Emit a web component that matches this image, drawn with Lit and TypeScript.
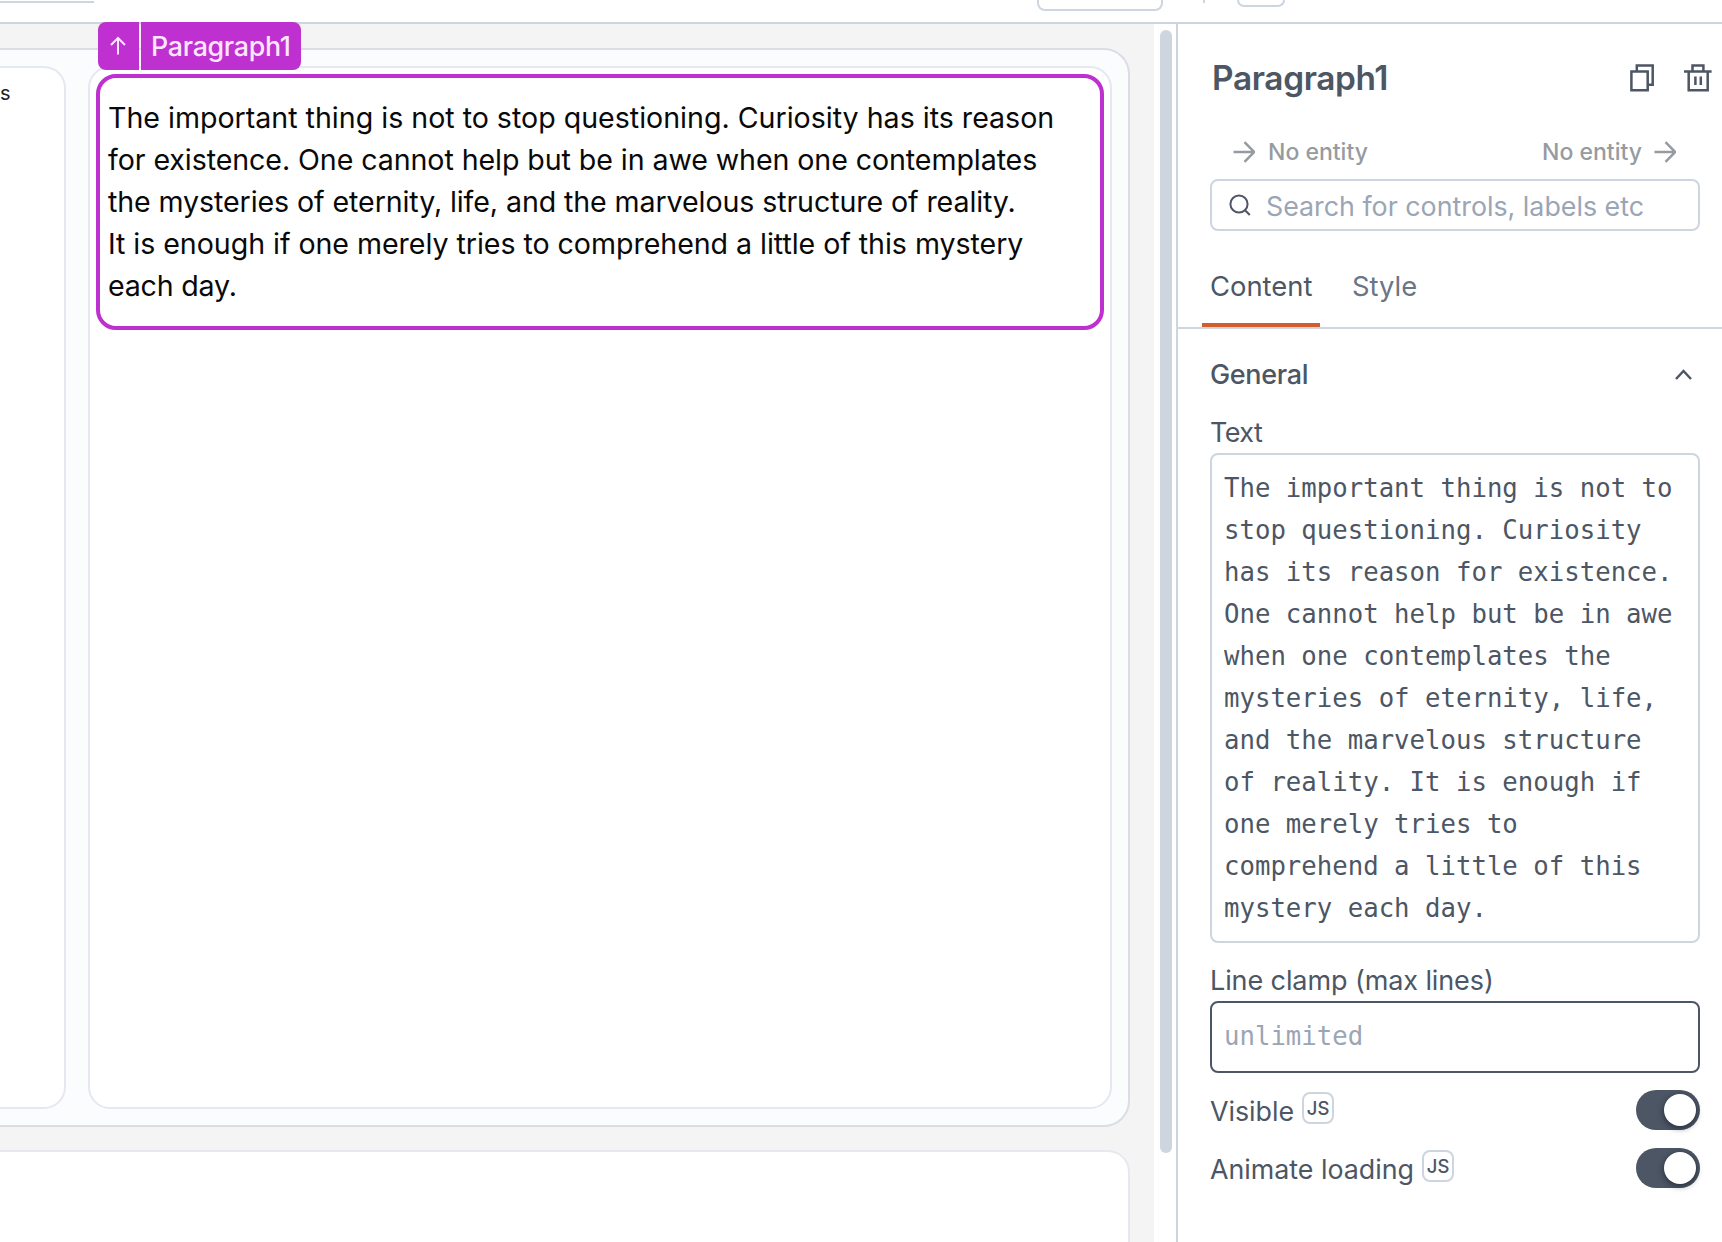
import { LitElement, html, css, svg } from "lit";
import { customElement, property } from "lit/decorators.js";

// Each line carries its own tracking, in pixels.
const QUOTE_LINES: [string, number][] = [
  ["The important thing is not to stop questioning. Curiosity has its reason", -0.01],
  ["for existence. One cannot help but be in awe when one contemplates", -0.08],
  ["the mysteries of eternity, life, and the marvelous structure of reality.", -0.1],
  ["It is enough if one merely tries to comprehend a little of this mystery", -0.05],
  ["each day.", -0.2],
];

const EDITOR_LINES = [
  "The important thing is not to",
  "stop questioning. Curiosity",
  "has its reason for existence.",
  "One cannot help but be in awe",
  "when one contemplates the",
  "mysteries of eternity, life,",
  "and the marvelous structure",
  "of reality. It is enough if",
  "one merely tries to",
  "comprehend a little of this",
  "mystery each day.",
];

const shared = css`
  * { box-sizing: border-box; }
  svg { display: block; flex: none; fill: none; stroke: currentColor; }
`;

@customElement("toggle-row")
class ToggleRow extends LitElement {
  @property() label = "";
  static styles = [shared, css`
    :host { display: flex; align-items: center; height: 40px; }
    .label { padding-top: 2px; font-size: 26.8px; line-height: 36px; white-space: nowrap; }
    .js {
      width: 32px; height: 32px; margin: 0 auto 4px 8px;
      border: 2px solid #cdd5df; border-radius: 8px;
      display: flex; align-items: center; justify-content: center;
      font-size: 18.5px; line-height: 24px; font-weight: 500;
    }
    .switch {
      width: 64px; height: 40px; border-radius: 20px; background: #4c5664;
      padding: 4px 4px; display: flex; justify-content: flex-end;
    }
    .knob { width: 32px; height: 32px; border-radius: 50%; background: #fff; box-shadow: 0 2px 6px rgba(10, 16, 30, 0.6); }
  `];
  render() {
    return html`<span class="label">${this.label}</span><span class="js">JS</span>
      <span class="switch"><span class="knob"></span></span>`;
  }
}

@customElement("canvas-area")
class CanvasArea extends LitElement {
  static styles = [shared, css`
    :host { display: flex; width: 1176px; }
    .page { width: 1154px; background: #f4f4f4; padding: 24px 24px 0 0; }
    .section {
      height: 1079px; display: flex; gap: 22px; padding: 16px 16px 16px 0;
      background: #fbfcfe; border: 2px solid #dadde3; border-left: 0; border-radius: 0 26px 26px 0;
    }
    .zone { background: #fff; border: 2px solid #e5e8ef; border-radius: 22px; }
    .left { width: 66px; border-left: 0; border-radius: 0 22px 22px 0; padding-top: 13px; font-size: 20px; line-height: 24px; color: #222; }
    .right { flex: 1; padding: 6px; }
    .widget { position: relative; height: 256px; border: 4px solid #be30cf; border-radius: 20px; padding: 19px 0 0 8px; }
    .widget p { margin: 0; font-size: 28.6px; line-height: 42.1px; color: #090909; white-space: nowrap; }
    .tag {
      position: absolute; left: -2px; top: -56px; width: 203px; height: 48px;
      display: flex; border-radius: 8px; overflow: hidden; color: #fbe6fd;
    }
    .up { width: 41px; background: #be30cf; display: flex; align-items: center; justify-content: center; padding-right: 2px; }
    .name {
      flex: 1; margin-left: 2px; background: #be30cf; padding: 3px 0 0 10px;
      font-size: 26.8px; line-height: 42px; font-weight: 500; letter-spacing: -0.3px;
    }
    .next { height: 120px; margin-top: 23px; background: #fff; border: 2px solid #e5e8ef; border-left: 0; border-radius: 0 22px 22px 0; }
    .gutter { width: 22px; background: #fff; padding: 6px 0 0 6px; }
    .thumb { width: 12px; height: 1123px; border-radius: 6px; background: #cdd5df; }
  `];
  render() {
    return html`
      <div class="page">
        <div class="section">
          <div class="zone left">s</div>
          <div class="zone right">
            <div class="widget">
              <p>${QUOTE_LINES.map(([l, t], i) => html`${i ? html`<br>` : ""}<span style="letter-spacing:${t}px">${l}</span>`)}</p>
              <div class="tag">
                <span class="up"><svg width="18" height="20" viewBox="0 0 18 20" stroke-width="2"><path d="M9 18.5V2.5M2 9l7-7 7 7"/></svg></span>
                <span class="name">Paragraph1</span>
              </div>
            </div>
          </div>
        </div>
        <div class="next"></div>
      </div>
      <div class="gutter"><div class="thumb"></div></div>`;
  }
}

const arrow = svg`<path d="M0.5 11H21M11.5 1.2l9.8 9.8-9.8 9.8"/>`;

@customElement("property-pane")
class PropertyPane extends LitElement {
  static styles = [shared, css`
    :host { display: block; flex: 1; border-left: 2px solid #cdd5df; padding-top: 34px; color: #4c5664; }
    .title { display: flex; height: 40px; align-items: center; padding: 0 10px 0 34px; }
    h1 { margin: 0 auto 0 0; font-size: 33.4px; line-height: 40px; font-weight: 600; letter-spacing: -0.35px; }
    .bin { margin-left: 30px; }
    .entities {
      display: flex; justify-content: space-between; height: 28px; margin-top: 40px; padding: 0 46px 0 55px;
      font-size: 23px; line-height: 28px; font-weight: 500; color: #969ba1;
    }
    .entity { display: flex; align-items: center; gap: 12px; }
    .in { gap: 13px; }
    .search {
      display: flex; align-items: center; gap: 15px; height: 52px; margin: 13px 22px 0 32px; padding-left: 17px;
      border: 2px solid #cdd5df; border-radius: 8px;
    }
    .hint { padding-top: 2px; font-size: 26.8px; line-height: 36px; color: #9aa5b5; }
    .tabs { display: flex; height: 98px; padding: 37px 0 0 24px; border-bottom: 2px solid #cdd5df; font-size: 27.4px; line-height: 36px; }
    .tab { width: 118px; height: 59px; padding-left: 8px; }
    .active { border-bottom: 4px solid #d15e2c; }
    .style { color: #6a7585; margin-left: 24px; }
    .body { padding: 28px 22px 0 32px; font-size: 27px; line-height: 36px; }
    .group { display: flex; align-items: center; justify-content: space-between; padding-right: 8px; font-weight: 500; letter-spacing: -0.35px; }
    .label { height: 36px; margin: 22px 0 2px; letter-spacing: -0.6px; }
    .clamp { margin-top: 20px; letter-spacing: -0.1px; }
    .field {
      border: 2px solid #cdd5df; border-radius: 8px; padding: 12px; white-space: pre;
      font: 25.7px/42px "DejaVu Sans Mono", monospace;
    }
    .focus { border-color: #4c5664; height: 72px; color: #9aa5b5; }
    .first { margin: 17px 0 18px; }
  `];
  render() {
    return html`
      <div class="title">
        <h1>Paragraph1</h1>
        <svg width="24" height="28" viewBox="0 0 24 28" stroke-width="2.5"><path d="M1.4 7.4H17.7V26.3H1.4ZM6.8 7V1.4H22.7V20.8H18"/></svg>
        <svg class="bin" width="28" height="28" viewBox="0 0 28 28" stroke-width="2.5"><path d="M0 7.5H27.6M4.7 7.5V26.3H23.7V7.5M8.5 7V1.4H19.4V7M11.4 12.5V21M16.8 12.5V21"/></svg>
      </div>
      <div class="entities">
        <span class="entity in"><svg width="22" height="22" viewBox="0 0 22 22" stroke-width="2.5">${arrow}</svg>No entity</span>
        <span class="entity">No entity<svg width="22" height="22" viewBox="0 0 22 22" stroke-width="2.5">${arrow}</svg></span>
      </div>
      <div class="search">
        <svg width="22" height="22" viewBox="0 0 22 22" stroke-width="2"><circle cx="10" cy="10" r="8.6"/><path d="M15.8 16l5 5"/></svg>
        <span class="hint">Search for controls, labels etc</span>
      </div>
      <div class="tabs"><span class="tab active">Content</span><span class="tab style">Style</span></div>
      <div class="body">
        <div class="group">General<svg width="17" height="12" viewBox="0 0 17 12" stroke-width="2.5"><path d="M1 10L8.5 2L16 10"/></svg></div>
        <div class="label">Text</div>
        <div class="field">${EDITOR_LINES.join("\n")}</div>
        <div class="label clamp">Line clamp (max lines)</div>
        <div class="field focus">unlimited</div>
        <toggle-row class="first" label="Visible"></toggle-row>
        <toggle-row label="Animate loading"></toggle-row>
      </div>`;
  }
}

@customElement("app-root")
class AppRoot extends LitElement {
  static styles = [shared, css`
    :host {
      display: flex; flex-direction: column; width: 1722px; height: 1242px; overflow: hidden;
      background: #fff; font-family: Inter, "Liberation Sans", sans-serif;
    }
    .header { flex: none; display: flex; align-items: flex-start; height: 24px; border-bottom: 2px solid #cdd5df; }
    .rule { width: 94px; height: 3px; border-bottom: 2px solid #cdd5df; margin-right: 943px; }
    .button { border: 2px solid #cdd5df; border-top: 0; border-radius: 0 0 8px 8px; }
    .wide { width: 126px; height: 11px; }
    .small { width: 48px; height: 7px; }
    .tick { width: 2px; height: 3px; margin: 0 32px 0 40px; background: #cdd5df; }
    .main { flex: 1; min-height: 0; display: flex; }
  `];
  render() {
    return html`
      <div class="header">
        <span class="rule"></span><span class="button wide"></span><span class="tick"></span><span class="button small"></span>
      </div>
      <div class="main"><canvas-area></canvas-area><property-pane></property-pane></div>`;
  }
}
